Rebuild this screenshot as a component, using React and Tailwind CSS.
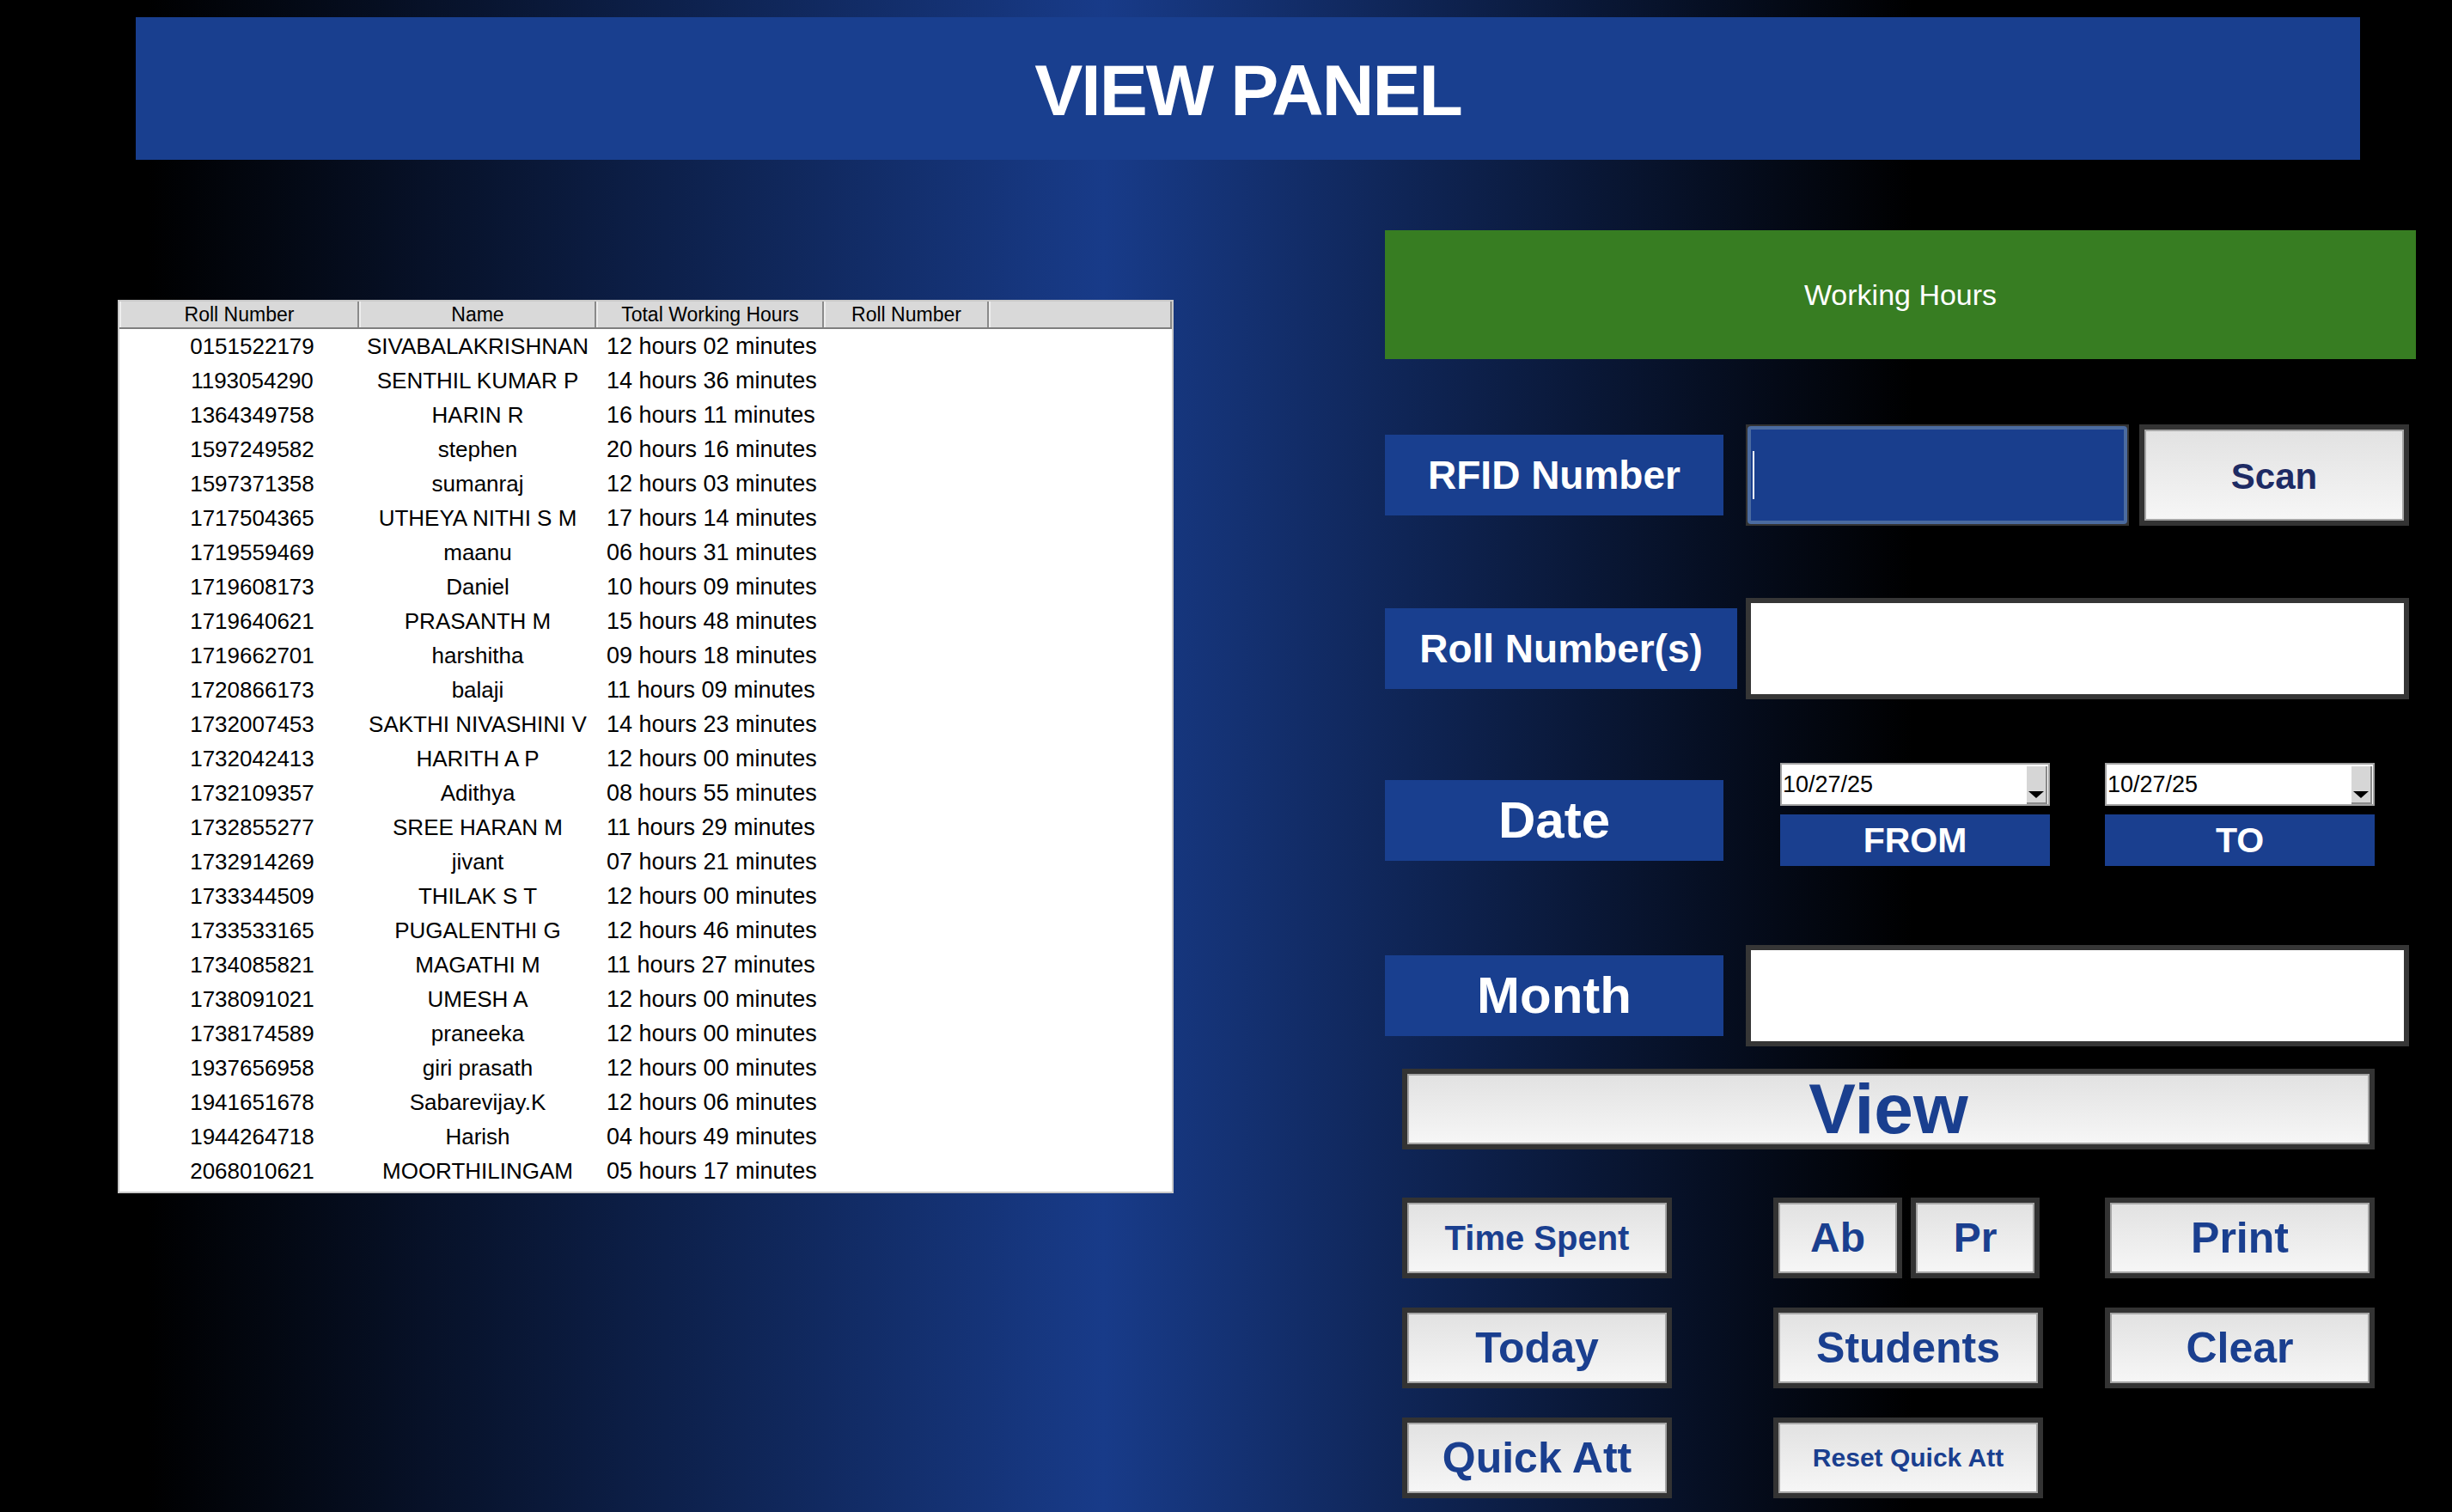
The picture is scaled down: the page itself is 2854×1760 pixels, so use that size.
import React from 'react'

const rows = [
  ['0151522179', 'SIVABALAKRISHNAN', '12 hours 02 minutes'],
  ['1193054290', 'SENTHIL KUMAR P', '14 hours 36 minutes'],
  ['1364349758', 'HARIN R', '16 hours 11 minutes'],
  ['1597249582', 'stephen', '20 hours 16 minutes'],
  ['1597371358', 'sumanraj', '12 hours 03 minutes'],
  ['1717504365', 'UTHEYA NITHI S M', '17 hours 14 minutes'],
  ['1719559469', 'maanu', '06 hours 31 minutes'],
  ['1719608173', 'Daniel', '10 hours 09 minutes'],
  ['1719640621', 'PRASANTH M', '15 hours 48 minutes'],
  ['1719662701', 'harshitha', '09 hours 18 minutes'],
  ['1720866173', 'balaji', '11 hours 09 minutes'],
  ['1732007453', 'SAKTHI NIVASHINI V', '14 hours 23 minutes'],
  ['1732042413', 'HARITH A P', '12 hours 00 minutes'],
  ['1732109357', 'Adithya', '08 hours 55 minutes'],
  ['1732855277', 'SREE HARAN M', '11 hours 29 minutes'],
  ['1732914269', 'jivant', '07 hours 21 minutes'],
  ['1733344509', 'THILAK S T', '12 hours 00 minutes'],
  ['1733533165', 'PUGALENTHI G', '12 hours 46 minutes'],
  ['1734085821', 'MAGATHI M', '11 hours 27 minutes'],
  ['1738091021', 'UMESH A', '12 hours 00 minutes'],
  ['1738174589', 'praneeka', '12 hours 00 minutes'],
  ['1937656958', 'giri prasath', '12 hours 00 minutes'],
  ['1941651678', 'Sabarevijay.K', '12 hours 06 minutes'],
  ['1944264718', 'Harish', '04 hours 49 minutes'],
  ['2068010621', 'MOORTHILINGAM', '05 hours 17 minutes'],
]

function Label({ children, w = 'w-[394px]', size = 'text-[46px]' }) {
  return (
    <div className={`${w} h-[94px] shrink-0 bg-[#193f8f] text-white font-bold leading-none flex items-center justify-center ${size}`}>
      {children}
    </div>
  )
}

function Btn({ children, w = 'w-[314px]', h = 'h-[94px]', size = 'text-[48px]', color = 'text-[#1a3f8f]' }) {
  return (
    <div className={`${w} ${h} shrink-0 bg-[#333] p-[6px]`}>
      <div className={`h-full border-2 border-[#a6a6a6] bg-gradient-to-b from-[#e2e2e2] to-[#f6f6f6] font-bold leading-none flex items-center justify-center ${size} ${color}`}>
        {children}
      </div>
    </div>
  )
}

function DatePicker({ value }) {
  return (
    <div className="h-[50px] border-2 border-[#a3a3a3] bg-white flex">
      <span className="self-center pl-[1px] text-[27px] leading-none text-black">{value}</span>
      <div className="ml-auto mr-[1px] mt-[2px] w-[24px] bg-[#d6d6d6] border-r-2 border-b-2 border-[#8a8a8a] flex flex-col justify-end items-center pb-[5px]">
        <div className="w-0 h-0 border-l-[9px] border-r-[9px] border-t-[8px] border-l-transparent border-r-transparent border-t-black" />
      </div>
    </div>
  )
}

export default function App() {
  return (
    <div className="w-[2854px] h-[1760px] overflow-hidden pt-[20px] bg-[linear-gradient(90deg,#000_6%,#183b89_45%,#000_78%)] font-['Liberation_Sans',Arial,sans-serif]">
      <div className="ml-[158px] w-[2589px] h-[166px] bg-[#193f8f] flex items-center justify-center">
        <h1 className="text-white font-bold text-[84px] tracking-[-2px] leading-none mt-[4px]">VIEW PANEL</h1>
      </div>

      <div className="mt-[82px] flex items-start">
        {/* attendance table */}
        <div className="ml-[137px] mt-[81px] w-[1229px] h-[1040px] shrink-0 border-2 border-[#c9c9c9] bg-white text-black">
          <div className="flex h-[32px] bg-[#d9d9d9] border-b-2 border-[#7f7f7f] text-[23px] leading-none">
            <div className="w-[279px] border-l-2 border-l-[#eeeeee] border-r-2 border-r-[#8a8a8a] flex items-center justify-center">Roll Number</div>
            <div className="w-[276px] border-l-2 border-l-[#eeeeee] border-r-2 border-r-[#8a8a8a] flex items-center justify-center">Name</div>
            <div className="w-[265px] border-l-2 border-l-[#eeeeee] border-r-2 border-r-[#8a8a8a] flex items-center justify-center">Total Working Hours</div>
            <div className="w-[192px] border-l-2 border-l-[#eeeeee] border-r-2 border-r-[#8a8a8a] flex items-center justify-center">Roll Number</div>
            <div className="flex-1 border-l-2 border-l-[#eeeeee] border-r-2 border-r-[#8a8a8a]" />
          </div>
          {rows.map(([roll, name, hours]) => (
            <div key={roll} className="flex h-[40px] items-center text-[26px] leading-none whitespace-nowrap">
              <div className="w-[279px] pl-[30px] text-center">{roll}</div>
              <div className="w-[276px] text-center">{name}</div>
              <div className="pl-[12px] text-[27px]">{hours}</div>
            </div>
          ))}
        </div>

        {/* controls */}
        <div className="ml-[246px] w-[1200px] shrink-0 flex flex-col">
          <div className="h-[150px] bg-[#377d22] flex items-center justify-center text-white text-[34px] leading-none">
            Working Hours
          </div>

          <div className="mt-[76px] h-[118px] flex items-center">
            <Label>RFID Number</Label>
            <div className="ml-[26px] w-[446px] h-full bg-[#333] p-[2px]">
              <div className="h-full rounded-[4px] border-4 border-[#4b6ba0] bg-[#193e8d] flex items-center pl-[2px]">
                <div className="w-[2px] h-[56px] bg-white" />
              </div>
            </div>
            <div className="ml-[12px]">
              <Btn h="h-[118px]" size="text-[42px]" color="text-[#1e2b64]">
                <span className="mt-[4px]">Scan</span>
              </Btn>
            </div>
          </div>

          <div className="mt-[84px] h-[118px] flex items-center">
            <Label w="w-[410px]">Roll Number(s)</Label>
            <div className="ml-[10px] w-[772px] h-full border-[6px] border-[#363636] bg-white" />
          </div>

          <div className="mt-[74px] flex items-start">
            <div className="mt-[20px]">
              <Label size="text-[60px]">Date</Label>
            </div>
            <div className="ml-[66px] w-[314px] flex flex-col">
              <DatePicker value="10/27/25" />
              <div className="mt-[10px] h-[60px] bg-[#1a3f8f] text-white font-bold text-[41px] leading-none flex items-center justify-center">FROM</div>
            </div>
            <div className="ml-[64px] w-[314px] flex flex-col">
              <DatePicker value="10/27/25" />
              <div className="mt-[10px] h-[60px] bg-[#1a3f8f] text-white font-bold text-[41px] leading-none flex items-center justify-center">TO</div>
            </div>
          </div>

          <div className="mt-[92px] h-[118px] flex items-center">
            <Label size="text-[60px]">Month</Label>
            <div className="ml-[26px] w-[772px] h-full border-[6px] border-[#363636] bg-white" />
          </div>

          <div className="mt-[26px] ml-[20px]">
            <Btn w="w-[1132px]" size="text-[82px]">View</Btn>
          </div>

          <div className="mt-[56px] ml-[20px] flex">
            <Btn size="text-[40px]">Time Spent</Btn>
            <div className="ml-[118px] flex gap-[10px]">
              <Btn w="w-[150px]">Ab</Btn>
              <Btn w="w-[150px]">Pr</Btn>
            </div>
            <div className="ml-[76px]">
              <Btn size="text-[50px]">Print</Btn>
            </div>
          </div>

          <div className="mt-[34px] ml-[20px] flex">
            <Btn size="text-[50px]">Today</Btn>
            <div className="ml-[118px]">
              <Btn size="text-[50px]">Students</Btn>
            </div>
            <div className="ml-[72px]">
              <Btn size="text-[50px]">Clear</Btn>
            </div>
          </div>

          <div className="mt-[34px] ml-[20px] flex">
            <Btn size="text-[50px]">Quick Att</Btn>
            <div className="ml-[118px]">
              <Btn size="text-[30px]">Reset Quick Att</Btn>
            </div>
          </div>
        </div>
      </div>
    </div>
  )
}
